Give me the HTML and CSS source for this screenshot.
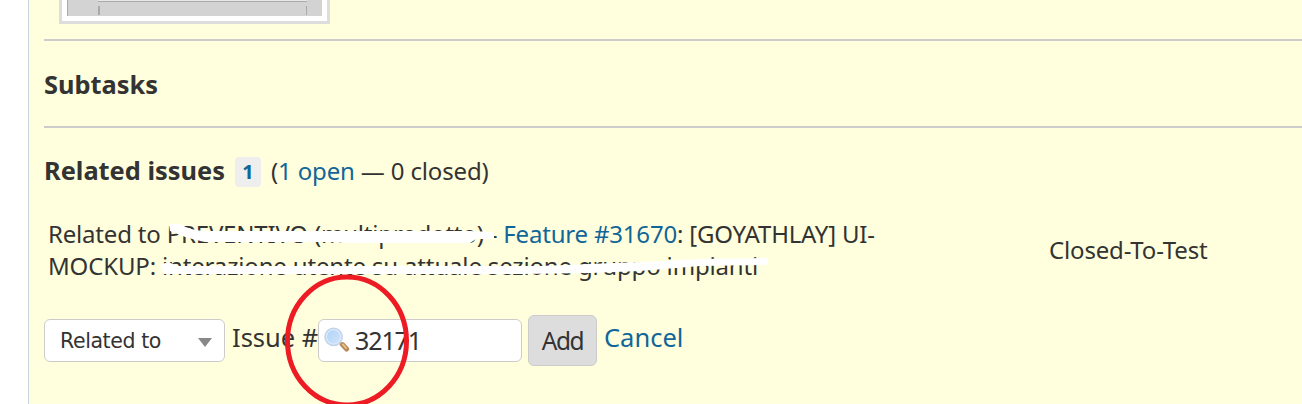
FILE: index.html
```html
<!DOCTYPE html>
<html lang="en">
<head>
    <meta charset="UTF-8">
    <meta name="viewport" content="width=device-width, initial-scale=1.0">
    <title>Related issues</title>
    <link rel="stylesheet" href="styles.css">
</head>
<body>
    <div class="issue">
        <div class="thumbnail">
            <div class="thumbnail-image">
                <div class="thumbnail-panel"></div>
                <div class="thumbnail-marks"></div>
            </div>
        </div>

        <div class="section subtasks">
            <h3>Subtasks</h3>
        </div>

        <div class="section relations">
            <div class="relations-title">
                <h3>Related issues</h3>
                <a class="badge">1</a>
                <span class="counts">(<a>1 open</a> — 0 closed)</span>
            </div>

            <div class="relation">
                <div class="subject">
                    <div class="line-one">Related to PREVENTIVO (multiprodotto) - <a>Feature #31670</a>: [GOYATHLAY] UI-</div>
                    <div class="line-two">MOCKUP: interazione utente su attuale sezione gruppo impianti</div>
                </div>
                <div class="status">Closed-To-Test</div>
            </div>

            <form class="relation-form">
                <div class="select"><span>Related to</span><i class="arrow"></i></div>
                <label>Issue #</label>
                <div class="field">
                    <svg width="26" height="26" viewBox="0 0 26 26">
                        <defs>
                            <linearGradient id="lens" x1="0" y1="0" x2="1" y2="1">
                                <stop offset="0" stop-color="#acd0f8"/>
                                <stop offset="1" stop-color="#d4e7fb"/>
                            </linearGradient>
                        </defs>
                        <path d="M15.5 15.5 L18 18" stroke="#c5ccd8" stroke-width="3"/>
                        <path d="M18.4 17.6 L22.6 22" stroke="#b98a5c" stroke-width="5" stroke-linecap="round"/>
                        <path d="M18.8 17.4 L22 21" stroke="#e6c592" stroke-width="1.8" stroke-linecap="round"/>
                        <circle cx="9.6" cy="9.8" r="8.6" fill="url(#lens)" stroke="#c2d3ea" stroke-width="1.6"/>
                        <circle cx="9.6" cy="9.8" r="7.2" fill="none" stroke="#dceafa" stroke-width="1.2"/>
                    </svg>
                    <span>32171</span>
                </div>
                <div class="button">Add</div>
                <a class="cancel">Cancel</a>
            </form>
        </div>

        <!-- hand-drawn marks over the page -->
        <svg class="marks" width="1302" height="404" viewBox="0 0 1302 404">
            <path fill="#fff" d="M169 224 L181 224 Q188 230 205 231 L470 231 L494 232 L494 239 L476 239 L470 243 L345 243 L330 242 L205 242 L188 238 L180 235 L170 231 Z"/>
            <path fill="#fff" d="M160 265 L168 262 L178 266 L540 266 L590 264 L640 262 L700 259 L768 258 L768 265 L700 266 L640 271 L590 273 L520 274 L164 274 Z"/>
            <ellipse cx="347" cy="341" rx="59.5" ry="64" fill="none" stroke="#ed1c24" stroke-width="5"/>
        </svg>
    </div>
</body>
</html>
```
FILE: styles.css
```css
*, *::before, *::after {
    box-sizing: border-box;
}

body {
    margin: 0;
    background-color: #fff;
    color: #333;
    font: 24px/32px "Noto Sans", sans-serif;
    overflow: hidden;
    white-space: nowrap;
}

a {
    color: #116699;
}

h3 {
    margin: 0;
    font-size: 25.4px;
    font-weight: bold;
}

.issue {
    height: 404px;
    margin-left: 28px;
    padding-left: 15px;
    border-left: 1px solid #c6d4dc;
    background-color: #ffffdd;
}

.thumbnail {
    width: 271px;
    height: 24px;
    margin-left: 15px;
    padding: 0 5px 5px;
    border: solid #ddd;
    border-width: 0 3px 3px;
    background-color: #fff;
}

.thumbnail-image {
    height: 16px;
    border-left: 1px solid #aaa;
    background-color: #d3d3d3;
}

.thumbnail-panel {
    width: 209px;
    height: 2px;
    margin-left: 30px;
    border-bottom: 1px solid #aaa;
    background-color: #e8e8e8;
}

.thumbnail-marks {
    width: 209px;
    height: 9px;
    margin: 4px 0 0 30px;
    border: solid #aaa;
    border-width: 0 1px 0 2px;
}

.section {
    border-top: 2px solid #ccc;
}

.subtasks {
    height: 87px;
    margin-top: 15px;
    padding-top: 27px;
}

.relations {
    padding-top: 27px;
}

.relations-title {
    display: flex;
    align-items: center;
    height: 32px;
}

.relations-title h3 {
    margin-top: -2px;
}

.badge {
    width: 26px;
    height: 30px;
    margin: 2px 0 0 10px;
    border-radius: 4px;
    background-color: #eee;
    font-size: 20px;
    font-weight: bold;
    line-height: 30px;
    text-align: center;
}

.counts {
    margin-left: 10px;
    letter-spacing: -0.15px;
}

.relation {
    display: flex;
    align-items: center;
    margin-top: 31px;
    padding-left: 4px;
}

.subject {
    width: 1001px;
}

.line-one {
    letter-spacing: -0.19px;
}

.line-two, .status {
    letter-spacing: -0.16px;
}

.relation-form {
    display: flex;
    align-items: center;
    height: 50px;
    margin-top: 33px;
    font-size: 25.5px;
}

.select {
    display: flex;
    align-items: center;
    justify-content: space-between;
    width: 181px;
    height: 43px;
    padding: 0 12px 0 15px;
    border: 1px solid #ccc;
    border-radius: 6px;
    background-color: #fff;
    font: 20.5px "DejaVu Sans", sans-serif;
    letter-spacing: -0.4px;
}

.select span {
    margin-top: 2px;
}

.arrow {
    margin-top: 5px;
    border: solid transparent;
    border-width: 9px 7px 0;
    border-top-color: #888;
}

.relation-form label {
    width: 86px;
    margin: -6px 0 0 7px;
}

.field {
    display: flex;
    align-items: center;
    width: 204px;
    height: 43px;
    padding-left: 5px;
    border: 1px solid #ccc;
    border-radius: 6px;
    background-color: #fff;
    font-size: 25px;
    letter-spacing: -1.1px;
}

.field span {
    margin: -1px 0 0 5px;
}

.button {
    width: 69px;
    height: 51px;
    margin-left: 6px;
    border: 1px solid #ccc;
    border-radius: 6px;
    background-color: #ddd;
    font-size: 24.5px;
    letter-spacing: -1.5px;
    line-height: 50px;
    text-align: center;
}

.cancel {
    margin: -6px 0 0 7px;
}

.marks {
    position: absolute;
    top: 0;
    left: 0;
}
```
